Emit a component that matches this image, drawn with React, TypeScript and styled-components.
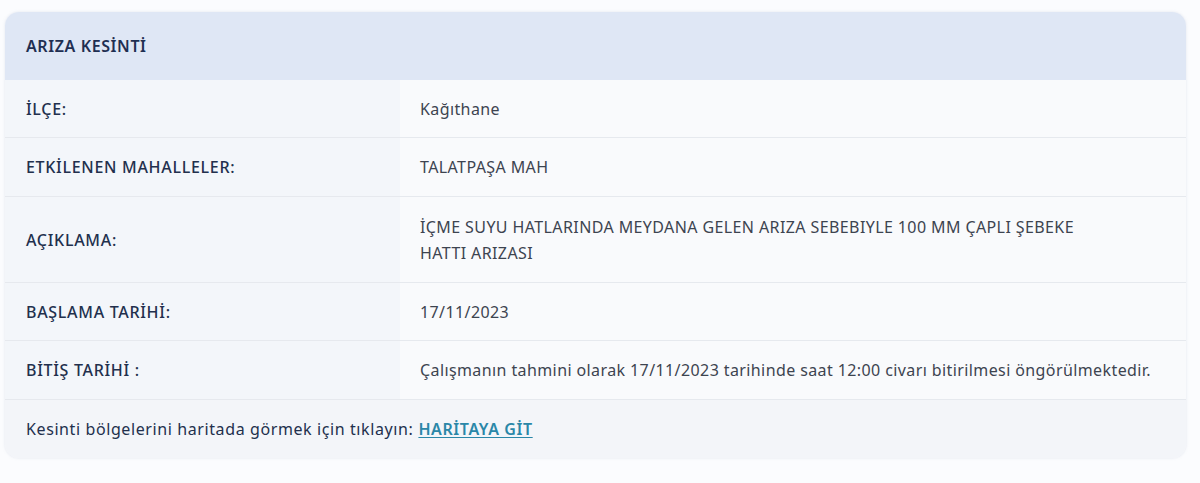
import React from "react";
import styled, { createGlobalStyle } from "styled-components";

const Global = createGlobalStyle`
  html, body { margin: 0; padding: 0; background: #fbfcfe; }
  body { font-family: "Noto Sans", "Open Sans", sans-serif; }
  *, *::before, *::after { box-sizing: border-box; }
`;

const Page = styled.div`
  padding: 12px 14px 25px 5px;
`;

const Card = styled.div`
  border-radius: 14px;
  overflow: hidden;
  background: #f9fafc;
  box-shadow: 0 0 3px rgba(180, 190, 210, 0.35);
`;

const Header = styled.div`
  height: 68px;
  display: flex;
  align-items: center;
  padding-left: 21px;
  background: #dfe7f5;
  color: #1f2f52;
  font-size: 16px;
  font-weight: 600;
  letter-spacing: 0.6px;
`;

const Row = styled.div<{ $h: number }>`
  display: grid;
  grid-template-columns: 395px 1fr;
  height: ${(p) => p.$h}px;
  border-bottom: 1px solid #e6e9ee;
`;

const Label = styled.div`
  display: flex;
  align-items: center;
  padding-left: 21px;
  background: #f3f6fa;
  color: #22304d;
  font-size: 16px;
  font-weight: 500;
  letter-spacing: 0.7px;
`;

const Value = styled.div`
  display: flex;
  align-items: center;
  padding-left: 20px;
  padding-right: 10px;
  color: #3d4450;
  font-size: 16px;
  line-height: 26px;
  letter-spacing: 0.4px;
`;

const ValueText = styled.span<{ $measure?: number }>`
  max-width: ${(p) => (p.$measure ? `${p.$measure}px` : "none")};
`;

const Footer = styled.div`
  height: 58px;
  display: flex;
  align-items: center;
  padding-left: 21px;
  background: #f3f5f9;
  color: #22304d;
  font-size: 16px;
  letter-spacing: 0.6px;
`;

const MapLink = styled.a`
  margin-left: 5px;
  color: #2a87a8;
  font-weight: 600;
  text-decoration: underline;
  text-underline-offset: 2px;
`;

const rows: { label: string; value: string; h: number; measure?: number }[] = [
  { label: "İLÇE:", value: "Kağıthane", h: 58 },
  { label: "ETKİLENEN MAHALLELER:", value: "TALATPAŞA MAH", h: 59 },
  {
    label: "AÇIKLAMA:",
    value: "İÇME SUYU HATLARINDA MEYDANA GELEN ARIZA SEBEBIYLE 100 MM ÇAPLI ŞEBEKE HATTI ARIZASI",
    h: 86,
    measure: 680,
  },
  { label: "BAŞLAMA TARİHİ:", value: "17/11/2023", h: 58 },
  {
    label: "BİTİŞ TARİHİ :",
    value: "Çalışmanın tahmini olarak 17/11/2023 tarihinde saat 12:00 civarı bitirilmesi öngörülmektedir.",
    h: 59,
  },
];

export default function App() {
  return (
    <Page>
      <Global />
      <Card>
        <Header>ARIZA KESİNTİ</Header>
        {rows.map((r) => (
          <Row key={r.label} $h={r.h}>
            <Label>{r.label}</Label>
            <Value>
              <ValueText $measure={r.measure}>{r.value}</ValueText>
            </Value>
          </Row>
        ))}
        <Footer>
          Kesinti bölgelerini haritada görmek için tıklayın:
          <MapLink href="#">HARİTAYA GİT</MapLink>
        </Footer>
      </Card>
    </Page>
  );
}
